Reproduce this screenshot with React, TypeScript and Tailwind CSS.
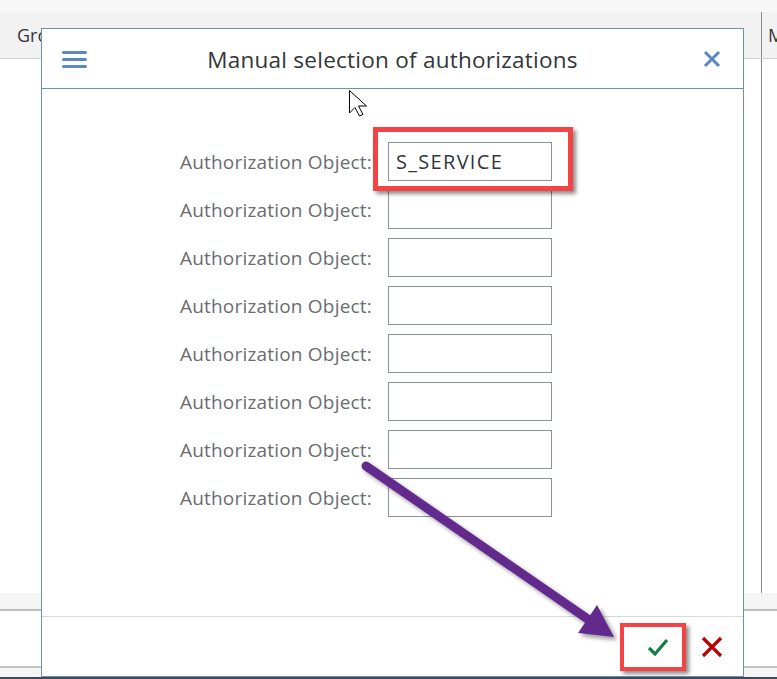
import React from "react";

const rows = ["S_SERVICE", "", "", "", "", "", "", ""];

export default function App() {
  return (
    <div
      className="relative w-[777px] h-[679px] overflow-hidden bg-white"
      style={{ fontFamily: '"Open Sans", "Noto Sans", sans-serif' }}
    >
      {/* background page */}
      <div className="flex flex-col h-full">
        <div className="h-[12px] bg-[#f7f7f7]" />
        <div className="h-[47px] bg-[#f2f2f2] border-b border-[#d4d4d4] flex items-center text-[18px] text-[#32363a]">
          <div className="pl-[17px] flex-1">Group</div>
          <div className="w-[16px] h-full border-l border-[#8a8a8a] pl-[6px] flex items-center">M</div>
        </div>
        <div className="flex-1 flex justify-end">
          <div className="w-[16px] border-l border-[#8a8a8a]" />
        </div>
        <div className="h-[18px] bg-[#f5f5f5] border-b-2 border-[#bdbdbd]" />
        <div className="h-[57px] bg-white border-b-2 border-[#c4c4c4]" />
        <div className="h-[9px] bg-[#f5f5f5]" />
        <div className="h-[2px] bg-[#3c4b5a]" />
      </div>

      {/* dialog */}
      <div className="absolute left-[41px] top-[28px] w-[703px] h-[649px] bg-white border border-[#6f8fb5] flex flex-col">
        <div className="h-[60px] border-b border-[#6f8fb5] flex items-center px-[20px] shrink-0">
          <div className="w-[40px] shrink-0 flex">
            <svg width="25" height="18" viewBox="0 0 25 18">
              <rect x="0" y="1" width="25" height="3" rx="1.5" fill="#5b8ac2" />
              <rect x="0" y="8" width="25" height="3" rx="1.5" fill="#5b8ac2" />
              <rect x="0" y="15" width="25" height="3" rx="1.5" fill="#5b8ac2" />
            </svg>
          </div>
          <div className="flex-1 text-center text-[22.5px] tracking-[0.25px] text-[#32363a] leading-none pt-[3px]">
            Manual selection of authorizations
          </div>
          <div className="w-[40px] shrink-0 flex justify-end">
            <svg width="18" height="18" viewBox="0 0 18 18" className="mr-[2px]">
              <path d="M2 2 L16 16 M16 2 L2 16" stroke="#5a88bf" strokeWidth="3" strokeLinecap="butt" />
            </svg>
          </div>
        </div>
        <div className="flex-1 pt-[53px] flex flex-col gap-[9px]">
          {rows.map((v, i) => (
            <div key={i} className="flex items-center h-[39px]">
              <div className="w-[346px] text-right text-[19px] tracking-[0.2px] text-[#6a6d70] pr-[16px] leading-none pt-[2px]">
                Authorization Object:
              </div>
              <div className="w-[164px] h-[39px] border border-[#89919a] flex items-center pl-[7px] text-[20px] tracking-[1.3px] text-[#32363a]">
                {v}
              </div>
            </div>
          ))}
        </div>
        <div className="h-[60px] border-t border-[#d9d9d9] flex items-center justify-end pr-[20px] gap-[32px] shrink-0">
          <svg width="22" height="20" viewBox="0 0 22 20">
            <path d="M2 11 L8 17 L20 3" stroke="#107e3e" strokeWidth="3.2" fill="none" strokeLinejoin="miter" />
          </svg>
          <svg width="22" height="22" viewBox="0 0 22 22">
            <path d="M2 2 L20 20 M20 2 L2 20" stroke="#bb0000" strokeWidth="3.2" />
          </svg>
        </div>
      </div>

      {/* highlight boxes */}
      <div className="absolute left-[373px] top-[127px] w-[200px] h-[64px] border-[5px] border-[#f24444] shadow-[3px_3px_4px_rgba(0,0,0,0.45)]" />
      <div className="absolute left-[620px] top-[623px] w-[66px] h-[48px] border-[4px] border-[#f24444] shadow-[3px_3px_4px_rgba(0,0,0,0.45)]" />

      {/* arrow + cursor overlay */}
      <svg className="absolute left-0 top-0 pointer-events-none" width="777" height="679" viewBox="0 0 777 679">
        <defs>
          <filter id="sh" x="-10%" y="-10%" width="130%" height="130%">
            <feDropShadow dx="3" dy="3" stdDeviation="2" floodColor="#000" floodOpacity="0.4" />
          </filter>
        </defs>
        <g filter="url(#sh)">
          <line x1="366" y1="466" x2="592" y2="622" stroke="#632a8d" strokeWidth="9" strokeLinecap="round" />
          <polygon points="614,637 597,605 578,633" fill="#632a8d" />
        </g>
        <path
          d="M349.5 90.5 L349.5 113 L355 107.5 L359.5 116 L363 114.5 L358.5 106 L366.5 106 Z"
          fill="#fff"
          stroke="#000"
          strokeWidth="1"
          strokeLinejoin="round"
        />
      </svg>
    </div>
  );
}
